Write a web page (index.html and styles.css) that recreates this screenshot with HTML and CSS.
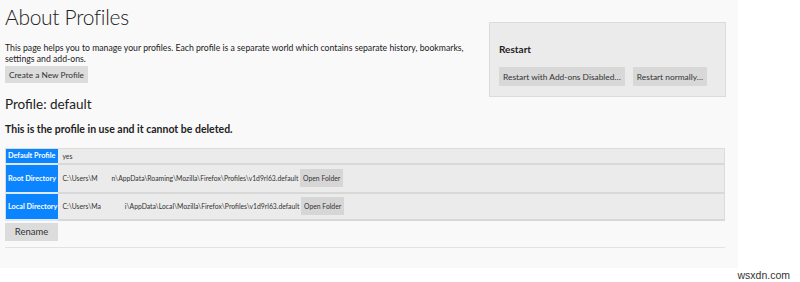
FILE: index.html
```html
<!DOCTYPE html>
<html lang="en">
<head>
    <meta charset="UTF-8">
    <title>About Profiles</title>
    <link rel="stylesheet" href="styles.css">
</head>
<body>
    <div class="page">
        <div class="restart-box">
            <h3>Restart</h3>
            <button>Restart with Add-ons Disabled…</button>
            <button>Restart normally…</button>
        </div>
        <h1>About Profiles</h1>
        <p class="intro">This page helps you to manage your profiles. Each profile is a separate world which contains separate history, bookmarks, settings and add-ons.</p>
        <button class="create">Create a New Profile</button>

        <h2>Profile: default</h2>
        <h3 class="in-use">This is the profile in use and it cannot be deleted.</h3>

        <table class="profile">
            <tr class="short">
                <th>Default Profile</th>
                <td>yes</td>
            </tr>
            <tr class="root-row">
                <th>Root Directory</th>
                <td>C:\Users\M<span class="blank root"></span>n\AppData\Roaming\Mozilla\Firefox\Profiles\v1d9rl63.default <button class="open">Open Folder</button></td>
            </tr>
            <tr class="local-row">
                <th>Local Directory</th>
                <td>C:\Users\Ma<span class="blank local"></span>i\AppData\Local\Mozilla\Firefox\Profiles\v1d9rl63.default <button class="open">Open Folder</button></td>
            </tr>
        </table>
        <button class="rename">Rename</button>
        <hr>
    </div>
    <div class="mark">wsxdn.com</div>
</body>
</html>
```

FILE: styles.css
```css
body {
    margin: 0;
    background: #fff;
    font-family: Lato, "Open Sans", sans-serif;
    color: #222;
}
.page {
    width: 728px;
    height: 268px;
    padding: 0 5px;
    background: #f9f9f9;
    overflow: hidden;
}
h1 {
    margin: 4px 0 0;
    font-size: 21px;
    line-height: 26px;
    font-weight: 300;
    letter-spacing: -0.3px;
    color: #222;
}
.intro {
    margin: 12px 0 0;
    width: 475px;
    font-size: 8.7px;
    line-height: 11px;
}
button {
    font-family: inherit;
    border: none;
    background: #dcdcdc;
    color: #333;
    padding: 0 4px;
    cursor: pointer;
}
.create {
    display: block;
    margin-top: 2px;
    height: 17px;
    font-size: 8.3px;
}
.restart-box {
    float: right;
    width: 226px;
    height: 73px;
    margin: 22px 7px 0 0;
    padding: 0 0 0 9px;
    background: #ebebeb;
    border: 1px solid #dcdcdc;
}
.restart-box h3 {
    margin: 19px 0 0;
    font-size: 10px;
    line-height: 14px;
}
.restart-box button {
    margin: 11px 4px 0 0;
    height: 19px;
    font-size: 8.4px;
    background: #d8d8d8;
}
h2 {
    margin: 12px 0 0;
    font-size: 13.5px;
    line-height: 18px;
    font-weight: 400;
}
.in-use {
    margin: 9px 0 0;
    font-size: 10.5px;
    line-height: 14px;
}
.profile {
    margin-top: 12px;
    width: 720px;
    border-collapse: collapse;
    border: 1px solid #dcdcdc;
    font-size: 6.8px;
}
.profile tr {
    border-bottom: 2px solid #d8d8d8;
}
.profile tr.short {
    height: 15px;
}
.profile tr.root-row {
    height: 29px;
}
.profile tr.local-row {
    height: 27px;
}
.profile th {
    width: 49px;
    padding: 0 1px 0 2px;
    background: #0a84ff;
    color: #fff;
    text-align: left;
    font-size: 7.3px;
    font-weight: 700;
    white-space: nowrap;
    border-bottom: 2px solid #dfe8f5;
}
.profile td {
    padding: 0 4px;
    background: #ebebeb;
    color: #333;
    white-space: nowrap;
}
.blank {
    display: inline-block;
}
.blank.root {
    width: 14px;
}
.blank.local {
    width: 24px;
}
.open {
    height: 18px;
    padding: 0 3px;
    font-size: 6.8px;
    background: #d6d6d6;
}
.rename {
    display: block;
    margin-top: 2px;
    width: 53px;
    height: 18px;
    font-size: 9.5px;
}
hr {
    margin: 6px 0 0;
    width: 720px;
    border: none;
    border-top: 1px solid #e2e2e2;
}
.mark {
    padding: 1px 10px 0 0;
    text-align: right;
    font-family: "Liberation Sans", Arial, sans-serif;
    font-size: 10.5px;
    color: #333;
}
```
